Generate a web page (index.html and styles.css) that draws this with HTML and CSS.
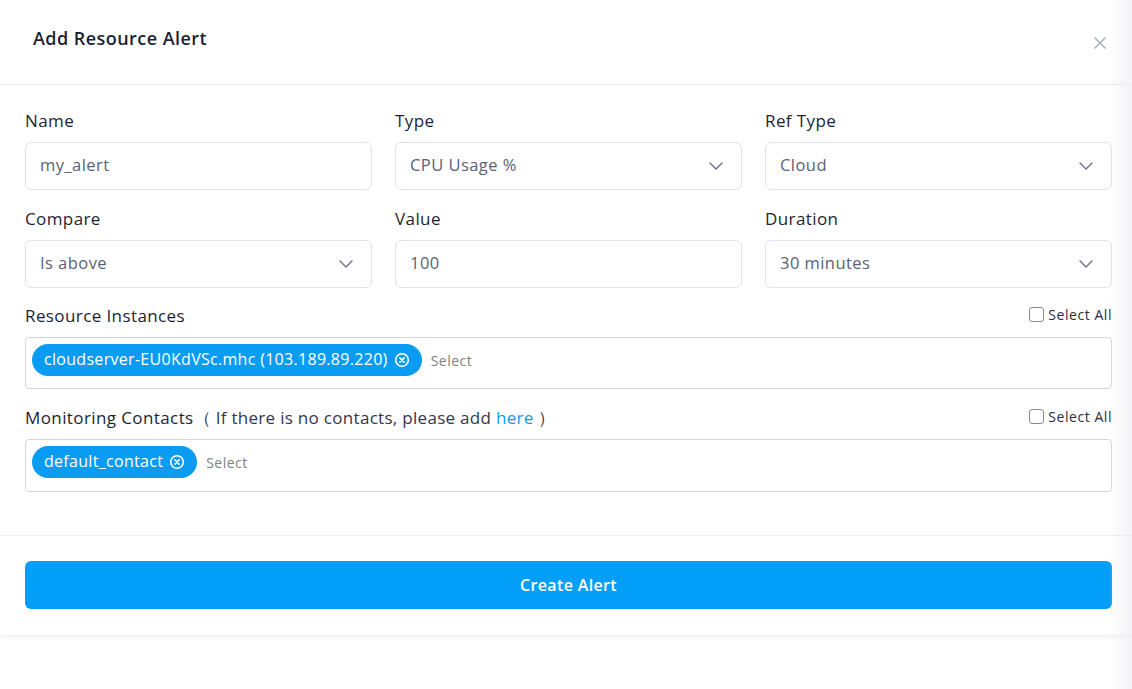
FILE: index.html
```html
<!DOCTYPE html>
<html lang="en">
<head>
<meta charset="utf-8">
<title>Add Resource Alert</title>
<link rel="stylesheet" href="styles.css">
</head>
<body>
<div class="modal">
  <header class="modal-header">
    <h2 class="modal-title">Add Resource Alert</h2>
    <button class="close-btn" aria-label="Close">
      <svg width="12" height="12" viewBox="0 0 12 12"><path d="M1 1L11 11M11 1L1 11" stroke="#a3a7ba" stroke-width="1.4" stroke-linecap="round"/></svg>
    </button>
  </header>
  <div class="modal-body">
    <div class="grid">
      <div class="field">
        <label class="label">Name</label>
        <div class="control">my_alert</div>
      </div>
      <div class="field">
        <label class="label">Type</label>
        <div class="control select">CPU Usage %<svg class="chev" width="14" height="8" viewBox="0 0 14 8"><path d="M1 1L7 7L13 1" fill="none" stroke="#6b6f86" stroke-width="1.4" stroke-linecap="round" stroke-linejoin="round"/></svg></div>
      </div>
      <div class="field">
        <label class="label">Ref Type</label>
        <div class="control select">Cloud<svg class="chev" width="14" height="8" viewBox="0 0 14 8"><path d="M1 1L7 7L13 1" fill="none" stroke="#6b6f86" stroke-width="1.4" stroke-linecap="round" stroke-linejoin="round"/></svg></div>
      </div>
      <div class="field">
        <label class="label">Compare</label>
        <div class="control select">Is above<svg class="chev" width="14" height="8" viewBox="0 0 14 8"><path d="M1 1L7 7L13 1" fill="none" stroke="#6b6f86" stroke-width="1.4" stroke-linecap="round" stroke-linejoin="round"/></svg></div>
      </div>
      <div class="field">
        <label class="label">Value</label>
        <div class="control">100</div>
      </div>
      <div class="field">
        <label class="label">Duration</label>
        <div class="control select">30 minutes<svg class="chev" width="14" height="8" viewBox="0 0 14 8"><path d="M1 1L7 7L13 1" fill="none" stroke="#6b6f86" stroke-width="1.4" stroke-linecap="round" stroke-linejoin="round"/></svg></div>
      </div>
    </div>

    <div class="multi-field">
      <div class="multi-head">
        <span class="label">Resource Instances</span>
        <label class="select-all"><span class="checkbox"></span>Select All</label>
      </div>
      <div class="multi-box">
        <span class="tag">cloudserver-EU0KdVSc.mhc (103.189.89.220)<svg class="tag-x" width="16" height="16" viewBox="0 0 16 16"><circle cx="8" cy="8" r="6.3" fill="none" stroke="#fff" stroke-width="1.6"/><path d="M5.9 5.9L10.1 10.1M10.1 5.9L5.9 10.1" stroke="#fff" stroke-width="1.6" stroke-linecap="round"/></svg></span>
        <span class="placeholder">Select</span>
      </div>
    </div>

    <div class="multi-field">
      <div class="multi-head">
        <span class="label">Monitoring Contacts<span class="hint">（ If there is no contacts, please add <a href="#" class="link">here</a> ）</span></span>
        <label class="select-all"><span class="checkbox"></span>Select All</label>
      </div>
      <div class="multi-box">
        <span class="tag">default_contact<svg class="tag-x" width="16" height="16" viewBox="0 0 16 16"><circle cx="8" cy="8" r="6.3" fill="none" stroke="#fff" stroke-width="1.6"/><path d="M5.9 5.9L10.1 10.1M10.1 5.9L5.9 10.1" stroke="#fff" stroke-width="1.6" stroke-linecap="round"/></svg></span>
        <span class="placeholder">Select</span>
      </div>
    </div>
  </div>
  <footer class="modal-footer">
    <button class="primary-btn">Create Alert</button>
  </footer>
</div>
<div class="edge-shade"></div>
</body>
</html>
```

FILE: styles.css
```css
* { box-sizing: border-box; }
html, body { margin: 0; padding: 0; background: #fff; }
body {
  font-family: "Open Sans", "Liberation Sans", sans-serif;
  color: #1c1f33;
  width: 1132px;
  height: 689px;
  overflow: hidden;
}
.modal {
  background: #fff;
  box-shadow: 0 2px 4px rgba(30, 30, 60, 0.08);
}
.modal-header {
  height: 85px;
  border-bottom: 1px solid #e8e8f0;
  display: flex;
  align-items: flex-start;
  justify-content: space-between;
  padding: 26px 26px 0 33px;
}
.modal-title {
  margin: 0;
  font-size: 18px;
  font-weight: 600;
  color: #1c1f33;
  letter-spacing: 0.45px;
}
.close-btn {
  background: none;
  border: 0;
  padding: 0;
  margin-top: 11px;
  width: 12px;
  height: 12px;
  display: flex;
}
.modal-body {
  padding: 26px 20px 43px 25px;
  border-bottom: 1px solid #ececf2;
}
.grid {
  display: grid;
  grid-template-columns: 1fr 1fr 1fr;
  column-gap: 23px;
  row-gap: 19px;
}
.field { display: flex; flex-direction: column; }
.label {
  font-size: 17px;
  font-weight: 500;
  color: #1c1f33;
  line-height: 20px;
  height: 20px;
  display: block;
  letter-spacing: 0.4px;
}
.control {
  margin-top: 11px;
  height: 48px;
  border: 1px solid #e2e2ee;
  border-radius: 6px;
  padding: 0 15px 3px 14px;
  display: flex;
  align-items: center;
  justify-content: space-between;
  font-size: 16.5px;
  letter-spacing: 0.45px;
  color: #5b5f77;
}
.chev { margin-right: 3px; margin-top: 3px; }

.multi-field { margin-top: 18px; }
.multi-field + .multi-field { margin-top: 19px; }
.multi-head {
  display: flex;
  justify-content: space-between;
  align-items: center;
  height: 20px;
}
.hint {
  font-weight: 500;
  color: #33364c;
  margin-left: 0;
  letter-spacing: 0.3px;
}
.link { color: #0a9cf2; text-decoration: none; }
.select-all {
  display: flex;
  align-items: center;
  font-size: 14px;
  letter-spacing: 0.55px;
  color: #2a2d40;
  margin-top: -3px;
}
.checkbox {
  width: 15px;
  height: 15px;
  border: 1px solid #8a8a8a;
  border-radius: 3px;
  margin-right: 4px;
  background: #fff;
}
.multi-box {
  margin-top: 11px;
  min-height: 52px;
  border: 1px solid #d6d6d6;
  border-radius: 4px;
  padding: 6px 6px;
  display: flex;
  align-items: flex-start;
}
.multi-field + .multi-field .multi-box { min-height: 53px; }
.tag {
  background: #0a9cf2;
  color: #fff;
  height: 32px;
  border-radius: 16px;
  padding: 0 12px 2px 12px;
  display: inline-flex;
  align-items: center;
  font-size: 16px;
  font-weight: 500;
  letter-spacing: 0.3px;
}
.tag-x { margin-left: 6px; margin-top: 2px; }
.placeholder {
  margin-left: 9px;
  font-size: 14px;
  letter-spacing: 0.5px;
  color: #808080;
  line-height: 33px;
}
.modal-footer {
  padding: 25px 20px 26px 25px;
}
.primary-btn {
  width: 100%;
  height: 48px;
  border: 0;
  border-radius: 6px;
  background: #039ef7;
  color: #fff;
  font-family: inherit;
  font-size: 16px;
  font-weight: 600;
  letter-spacing: 0.35px;
  padding-bottom: 2px;
}
.edge-shade {
  position: fixed;
  top: 0;
  right: 0;
  width: 24px;
  height: 100%;
  background: linear-gradient(to right, rgba(235, 235, 240, 0), rgba(235, 235, 240, 0.6));
  pointer-events: none;
}
```
